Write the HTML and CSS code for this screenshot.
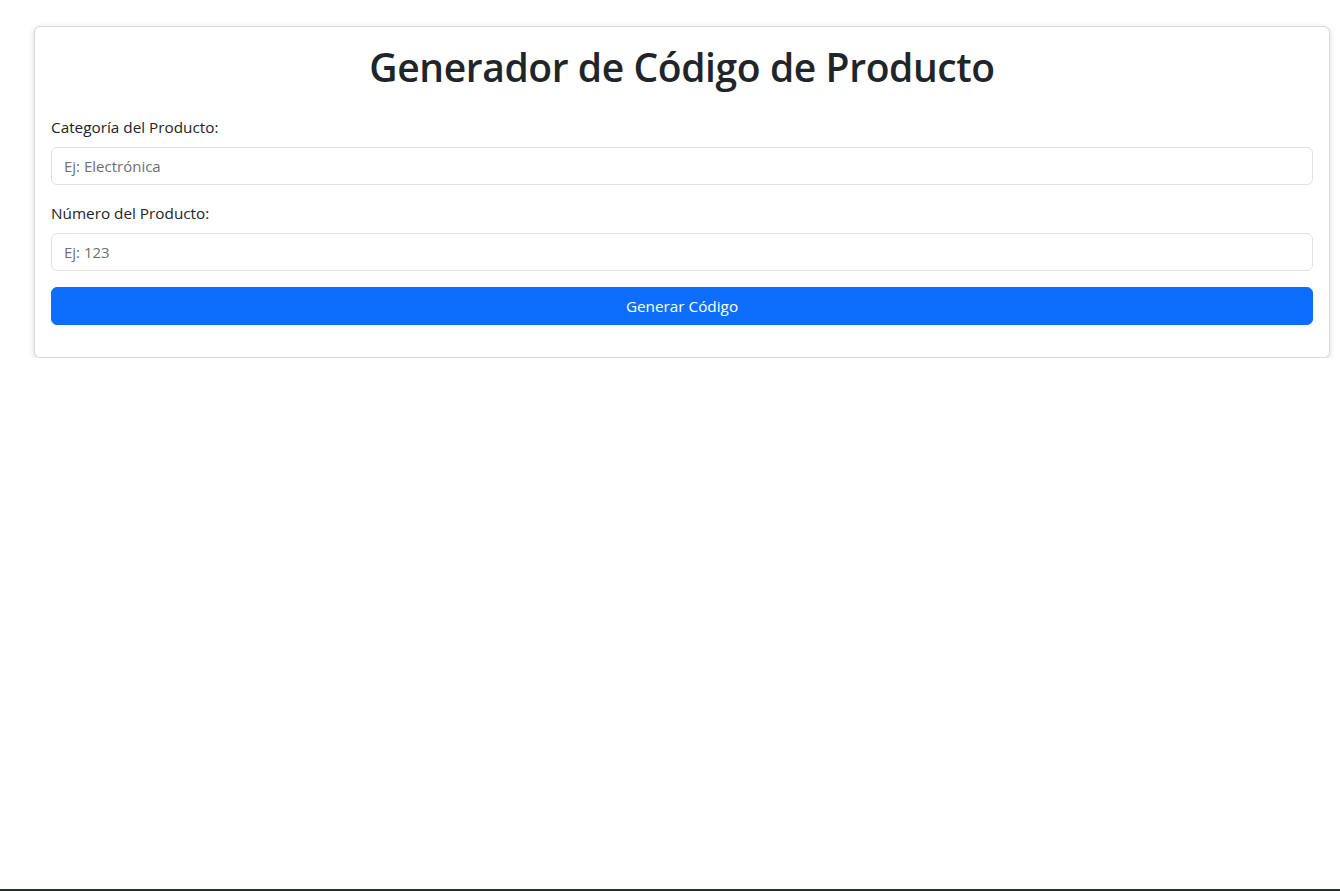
FILE: index.html
```html
<!DOCTYPE html>
<html lang="es">
<head>
<meta charset="utf-8">
<title>Generador de Código de Producto</title>
<link rel="stylesheet" href="styles.css">
</head>
<body>
<div class="container">
  <div class="card">
    <h1 class="title">Generador de Código de Producto</h1>
    <form class="form">
      <div class="field">
        <label class="label" for="cat">Categoría del Producto:</label>
        <input class="input" id="cat" type="text" placeholder="Ej: Electrónica">
      </div>
      <div class="field">
        <label class="label" for="num">Número del Producto:</label>
        <input class="input" id="num" type="text" placeholder="Ej: 123">
      </div>
      <button class="btn" type="button">Generar Código</button>
    </form>
  </div>
</div>
<div class="edge"></div>
</body>
</html>
```

FILE: styles.css
```css
* { box-sizing: border-box; }
html, body { margin: 0; padding: 0; background: #fff; }
body {
  font-family: "Open Sans", "Noto Sans", "Liberation Sans", sans-serif;
  font-size: 16px;
  line-height: 1.5;
  color: #212529;
}
.container {
  padding: 26px 11px 0 34px;
}
.card {
  width: 1296px;
  border: 1px solid #d6d8db;
  border-radius: 6px;
  box-shadow: 0 2px 6px rgba(0,0,0,0.15);
  padding: 16px 16px 32px;
  background: #fff;
}
.title {
  margin: 0 0 24px;
  font-size: 39px;
  line-height: 48px;
  font-weight: 600;
  text-align: center;
  letter-spacing: -0.4px;
  color: #212529;
}
.form { display: flex; flex-direction: column; }
.field { display: flex; flex-direction: column; margin-bottom: 16px; }
.label {
  display: block;
  margin-bottom: 8px;
  font-size: 15.3px;
  line-height: 24px;
  color: #212529;
}
.input {
  height: 38px;
  width: 100%;
  padding: 6px 12px;
  font-family: inherit;
  font-size: 15px;
  color: #212529;
  border: 1px solid #dee2e6;
  border-radius: 6px;
  background: #fff;
  outline: none;
}
.input::placeholder { color: #6c7075; opacity: 1; }
.btn {
  height: 38px;
  width: 100%;
  border: 1px solid #0d6efd;
  background: #0d6efd;
  color: #fff;
  border-radius: 6px;
  font-family: inherit;
  font-size: 15.3px;
  line-height: 24px;
  cursor: pointer;
}
.edge {
  position: fixed;
  left: 0;
  right: 0;
  bottom: 0;
  height: 2px;
  background: #263029;
}
```
